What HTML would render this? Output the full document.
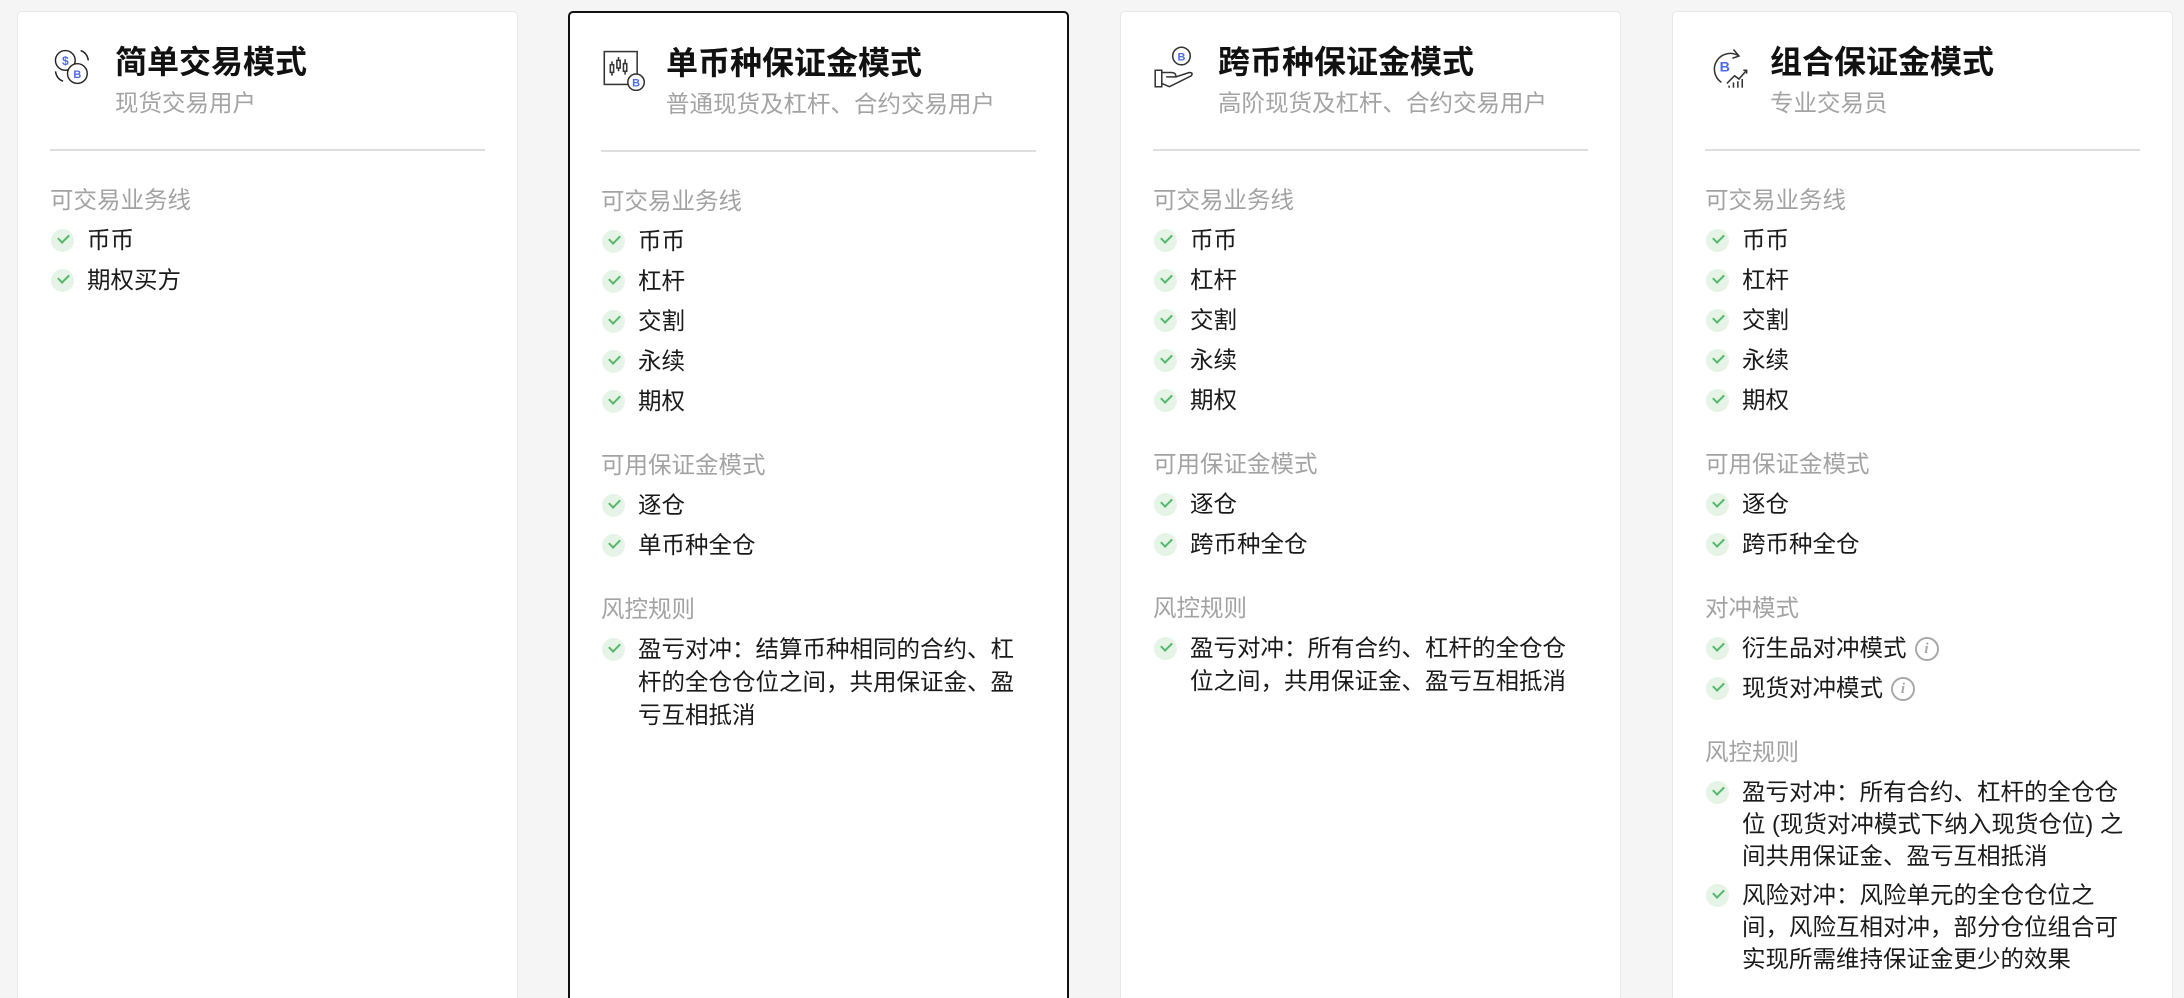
<!DOCTYPE html>
<html><head><meta charset="utf-8"><style>
*{box-sizing:border-box;margin:0;padding:0}
html,body{width:2184px;height:998px;overflow:hidden;background:#f5f5f5;font-family:"Liberation Sans","Noto Sans CJK SC",sans-serif}
#wrap{position:relative;width:2184px;height:998px;overflow:hidden}
.card{position:absolute;top:11px;width:501px;height:1000px;background:#fff;border:1px solid #e8e8e8;border-radius:5px;padding:0 32px}
.card.sel{border:2px solid #111;padding:0 31px}
.hd{position:relative;height:139px;border-bottom:2px solid #dedede}
.ic{position:absolute;left:0px;top:32px;width:46px;height:46px}
.t{position:absolute;left:65px;top:30px;font-size:32px;font-weight:bold;line-height:40px;color:#111;white-space:nowrap}
.s{position:absolute;left:65px;top:75px;font-size:23.5px;line-height:32px;color:#a3a3a3;white-space:nowrap}
.sec{margin-top:31px}
.sec.first{margin-top:33px}
.lb{font-size:23.5px;line-height:33px;color:#a3a3a3;white-space:nowrap}
.it{position:relative;margin-top:7px;padding-left:37px;font-size:23.5px;line-height:33px;height:auto;color:#1a1a1a;white-space:nowrap}
.it:before{content:"";position:absolute;left:1px;top:5px;width:23px;height:23px;border-radius:50%;background:#e6f4e8}
.it:after{content:"";position:absolute;left:8px;top:10px;width:9px;height:5px;border-left:2px solid #55b86a;border-bottom:2px solid #55b86a;transform:rotate(-45deg)}
.info{display:inline-block;width:24px;height:24px;border:2px solid #a8a8a8;border-radius:50%;color:#a8a8a8;font:italic bold 15px/20px "Liberation Serif",serif;text-align:center;vertical-align:top;margin-top:5px;margin-left:8px}
</style></head><body><div id="wrap">

<div class="card" style="left:17px">
 <div class="hd">
  <svg class="ic" viewBox="0 0 42 42" fill="none" stroke="#222" stroke-width="1.3">
   <circle cx="14" cy="15" r="9" fill="#fff"/><text x="14" y="19" font-size="11" font-weight="bold" fill="#4d6bf0" stroke="none" text-anchor="middle" font-family="Liberation Sans">$</text>
   <circle cx="25" cy="27" r="9" fill="#fff"/><text x="25" y="31" font-size="10" font-weight="bold" fill="#4d6bf0" stroke="none" text-anchor="middle" font-family="Liberation Sans">B</text>
   <path d="M28 6 q6 2 7 9 M5 25 q1 7 7 9"/>
  </svg>
  <div class="t">简单交易模式</div><div class="s">现货交易用户</div>
 </div>
 <div class="sec first"><div class="lb">可交易业务线</div><div class="it">币币</div><div class="it">期权买方</div></div>
</div>

<div class="card sel" style="left:568px">
 <div class="hd">
  <svg class="ic" viewBox="0 0 42 42" fill="none" stroke="#333" stroke-width="1.4">
   <rect x="3" y="6" width="30" height="30"/>
   <path d="M10 15v13M16 11v13M22 13v14"/><rect x="8.5" y="18" width="3" height="7" fill="#fff"/><rect x="14.5" y="14" width="3" height="7" fill="#fff"/><rect x="20.5" y="17" width="3" height="7" fill="#fff"/>
   <circle cx="32" cy="34" r="7.5" fill="#fff"/><text x="32" y="38" font-size="10" font-weight="bold" fill="#4d6bf0" stroke="none" text-anchor="middle" font-family="Liberation Sans">B</text>
  </svg>
  <div class="t">单币种保证金模式</div><div class="s">普通现货及杠杆、合约交易用户</div>
 </div>
 <div class="sec first"><div class="lb">可交易业务线</div><div class="it">币币</div><div class="it">杠杆</div><div class="it">交割</div><div class="it">永续</div><div class="it">期权</div></div>
 <div class="sec"><div class="lb">可用保证金模式</div><div class="it">逐仓</div><div class="it">单币种全仓</div></div>
 <div class="sec"><div class="lb">风控规则</div><div class="it">盈亏对冲：结算币种相同的合约、杠<br>杆的全仓仓位之间，共用保证金、盈<br>亏互相抵消</div></div>
</div>

<div class="card" style="left:1120px">
 <div class="hd">
  <svg class="ic" viewBox="0 0 42 42" fill="none" stroke="#333" stroke-width="1.4">
   <circle cx="26" cy="11" r="8"/><text x="26" y="15" font-size="10" font-weight="bold" fill="#4d6bf0" stroke="none" text-anchor="middle" font-family="Liberation Sans">B</text>
   <path d="M2 24h6v15H2zM8 26h9q4 0 4 4h-9M8 36l7 3 20-10q2-3-2-3l-12 4"/>
  </svg>
  <div class="t">跨币种保证金模式</div><div class="s">高阶现货及杠杆、合约交易用户</div>
 </div>
 <div class="sec first"><div class="lb">可交易业务线</div><div class="it">币币</div><div class="it">杠杆</div><div class="it">交割</div><div class="it">永续</div><div class="it">期权</div></div>
 <div class="sec"><div class="lb">可用保证金模式</div><div class="it">逐仓</div><div class="it">跨币种全仓</div></div>
 <div class="sec"><div class="lb">风控规则</div><div class="it">盈亏对冲：所有合约、杠杆的全仓仓<br>位之间，共用保证金、盈亏互相抵消</div></div>
</div>

<div class="card" style="left:1672px">
 <div class="hd">
  <svg class="ic" viewBox="0 0 42 42" fill="none" stroke="#333" stroke-width="1.4">
   <path d="M31 11 A13 13 0 1 0 15 35"/><path d="M26 5l5 6-6 2"/>
   <text x="18" y="25" font-size="13" font-weight="bold" fill="#4d6bf0" stroke="none" text-anchor="middle" font-family="Liberation Sans">B</text>
   <path d="M20 36l7-7 4 3 7-8M35 24h3v3M22 40v-2M26 40v-5M30 40v-6M34 40v-8"/>
  </svg>
  <div class="t">组合保证金模式</div><div class="s">专业交易员</div>
 </div>
 <div class="sec first"><div class="lb">可交易业务线</div><div class="it">币币</div><div class="it">杠杆</div><div class="it">交割</div><div class="it">永续</div><div class="it">期权</div></div>
 <div class="sec"><div class="lb">可用保证金模式</div><div class="it">逐仓</div><div class="it">跨币种全仓</div></div>
 <div class="sec"><div class="lb">对冲模式</div><div class="it">衍生品对冲模式<span class="info">i</span></div><div class="it">现货对冲模式<span class="info">i</span></div></div>
 <div class="sec"><div class="lb">风控规则</div><div class="it" style="line-height:32px">盈亏对冲：所有合约、杠杆的全仓仓<br>位 (现货对冲模式下纳入现货仓位) 之<br>间共用保证金、盈亏互相抵消</div><div class="it" style="line-height:32px">风险对冲：风险单元的全仓仓位之<br>间，风险互相对冲，部分仓位组合可<br>实现所需维持保证金更少的效果</div></div>
</div>

</div></body></html>
